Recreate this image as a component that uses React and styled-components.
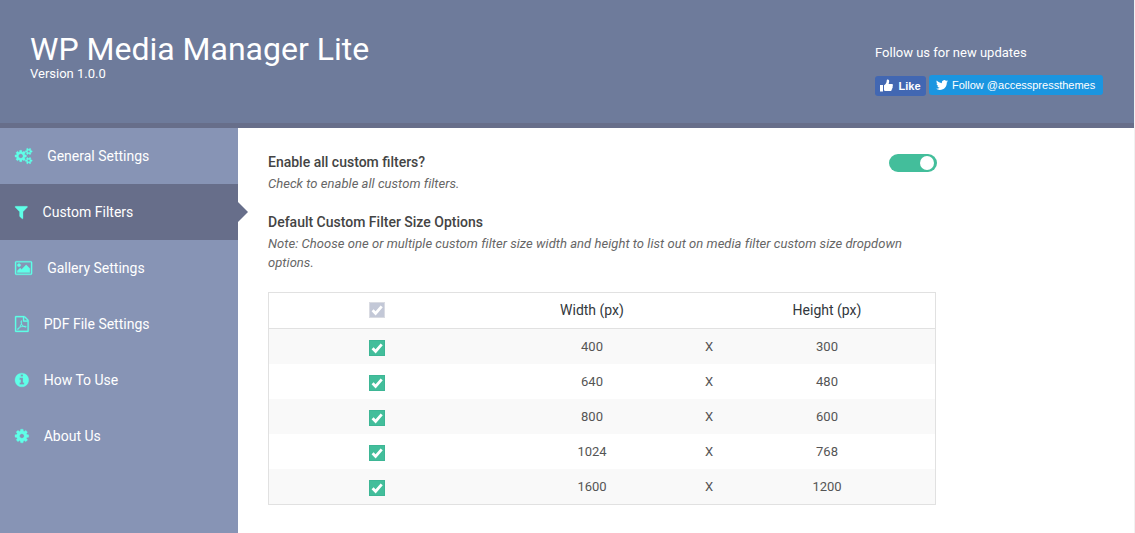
import React from "react";
import styled, { createGlobalStyle } from "styled-components";

const GlobalStyle = createGlobalStyle`
  *, *::before, *::after { box-sizing: border-box; }
  body {
    margin: 0;
    background: #fff;
    overflow: hidden;
    font-family: Roboto, "Liberation Sans", sans-serif;
  }
  h1, h2, p { margin: 0; }
`;

const Page = styled.div`
  display: flex;
  flex-direction: column;
  height: 533px;
  border-right: 1px solid #f1f1f1;
`;

const Header = styled.header`
  display: flex;
  justify-content: space-between;
  height: 128px;
  padding: 30px 30px 0;
  background: #6e7b9b;
  border-bottom: 5px solid #676e8a;
  color: #fff;
`;

const Title = styled.h1`
  font-size: 32px;
  font-weight: 400;
  line-height: 38px;
`;

const Version = styled.div`
  font-size: 13px;
  line-height: 12px;
`;

const Social = styled.div`
  width: 229px;
  padding-top: 14px;
`;

const SocialLabel = styled.p`
  font-size: 13px;
  line-height: 18px;
`;

const Buttons = styled.div`
  display: flex;
  gap: 3px;
  margin-top: 13px;
`;

const SocialButton = styled.a`
  display: flex;
  align-items: center;
  height: 20px;
  margin-top: ${(p) => p.$drop || 0}px;
  width: ${(p) => p.$width}px;
  padding-left: ${(p) => p.$pad}px;
  gap: ${(p) => p.$gap}px;
  background: ${(p) => p.$bg};
  border-radius: 3px;
  color: #fff;
  font: ${(p) => p.$weight} 11px/18px "Liberation Sans", Arial, sans-serif;
  white-space: nowrap;

  svg { margin-bottom: 1px; }
`;

const Body = styled.div`
  display: flex;
  flex: 1;
`;

const Sidebar = styled.nav`
  width: 238px;
  background: #8794b5;
`;

const NavItem = styled.a`
  position: relative;
  display: flex;
  align-items: center;
  gap: 15px;
  height: 56px;
  padding-left: 15px;
  color: #fff;
  background: ${(p) => (p.$active ? "#676e8a" : "transparent")};
  font-size: 14px;
  line-height: 20px;

  &::after {
    content: "";
    display: ${(p) => (p.$active ? "block" : "none")};
    position: absolute;
    left: 100%;
    top: 18px;
    border: 10px solid transparent;
    border-left-color: #676e8a;
    border-right-width: 0;
  }
`;

const NavIcon = styled.svg`
  display: block;
  height: 16px;
  margin-bottom: 1px;
  overflow: visible;
  fill: #5fffe8;
  stroke: #5fffe8;
  stroke-width: 35px;
`;

const Content = styled.main`
  width: 698px;
  margin-left: 30px;
  padding-top: 24px;
`;

const Option = styled.section`
  display: flex;
  justify-content: space-between;
  width: 669px;
  margin-bottom: 19px;
`;

const OptionTitle = styled.h2`
  color: #444;
  font-size: 14px;
  font-weight: 500;
  line-height: 20px;
`;

const Note = styled.p`
  padding-top: 2px;
  color: #666;
  font-size: 13px;
  font-style: italic;
  letter-spacing: 0.04px;
  line-height: 19px;
`;

const Toggle = styled.span`
  display: flex;
  justify-content: flex-end;
  width: 48px;
  height: 18px;
  margin-top: 2px;
  padding: 2px 3px;
  border-radius: 9px;
  background: #43be9b;

  &::after {
    content: "";
    width: 14px;
    height: 14px;
    border-radius: 50%;
    background: #fff;
  }
`;

const Table = styled.div`
  width: 668px;
  margin-top: 20px;
  border: 1px solid #e1e1e1;
`;

const Row = styled.div`
  display: grid;
  grid-template-columns: 216px 214px 20px 216px;
  height: 35px;
  color: #555;
  font-size: 13px;
  line-height: 35px;
  text-align: center;
  background: ${(p) => (p.$striped ? "#f9f9f9" : "#fff")};
`;

const HeadRow = styled(Row)`
  height: 36px;
  border-bottom: 1px solid #e1e1e1;
  color: #32373c;
  font-size: 14px;
`;

const CheckCell = styled.div`
  display: flex;
  justify-content: center;
  padding-top: ${(p) => p.$top}px;
`;

const CheckBox = styled.span`
  display: flex;
  width: 16px;
  height: 16px;
  border: 1px solid ${(p) => (p.$muted ? "#d9dbe2" : "#3db695")};
  background: ${(p) => (p.$muted ? "#c3c8d7" : "#43be9b")};
`;

const COGS =
  "M832 896q0-106-75-181t-181-75-181 75-75 181 75 181 181 75 181-75 75-181zm768 512q0-52-38-90t-90-38-90 38-38 90q0 53 37.5 90.5t90.5 37.5 90.5-37.5 37.5-90.5zm0-1024q0-52-38-90t-90-38-90 38-38 90q0 53 37.5 90.5t90.5 37.5 90.5-37.5 37.5-90.5zm-384 421v185q0 10-7 19.5t-16 10.5l-155 24q-11 35-32 76 34 48 90 115 7 11 7 20 0 12-7 19-23 30-82.5 89.5t-78.5 59.5q-11 0-21-7l-115-90q-37 19-77 31-11 108-23 155-7 24-30 24h-186q-11 0-20-7.5t-10-17.5l-23-153q-34-10-75-31l-118 89q-7 7-20 7-11 0-21-8-144-133-144-160 0-9 7-19 10-14 41-53t47-61q-23-44-35-82l-152-24q-10-1-17-9.5t-7-19.5v-185q0-10 7-19.5t16-10.5l155-24q11-35 32-76-34-48-90-115-7-11-7-20 0-12 7-20 22-30 82-89t79-59q11 0 21 7l115 90q34-18 77-32 11-108 23-154 7-24 30-24h186q11 0 20 7.5t10 17.5l23 153q34 10 75 31l118-89q8-7 20-7 11 0 21 8 144 133 144 160 0 8-7 19-12 16-42 54t-45 60q23 48 34 82l152 23q10 2 17 10.5t7 19.5zm640 533v140q0 16-149 31-12 27-30 52 51 113 51 138 0 4-4 7-122 71-124 71-8 0-46-47t-52-68q-20 2-30 2t-30-2q-14 21-52 68t-46 47q-2 0-124-71-4-3-4-7 0-25 51-138-18-25-30-52-149-15-149-31v-140q0-16 149-31 13-29 30-52-51-113-51-138 0-4 4-7 4-2 35-20t59-34 30-16q8 0 46 46.5t52 67.5q20-2 30-2t30 2q51-71 92-112l6-2q4 0 124 70 4 3 4 7 0 25-51 138 17 23 30 52 149 15 149 31zm0-1024v140q0 16-149 31-12 27-30 52 51 113 51 138 0 4-4 7-122 71-124 71-8 0-46-47t-52-68q-20 2-30 2t-30-2q-14 21-52 68t-46 47q-2 0-124-71-4-3-4-7 0-25 51-138-18-25-30-52-149-15-149-31v-140q0-16 149-31 13-29 30-52-51-113-51-138 0-4 4-7 4-2 35-20t59-34 30-16q8 0 46 46.5t52 67.5q20-2 30-2t30 2q51-71 92-112l6-2q4 0 124 70 4 3 4 7 0 25-51 138 17 23 30 52 149 15 149 31z";
const FILTER =
  "M1595 295q17 41-14 70l-493 493v742q0 42-39 59-13 5-25 5-27 0-45-19l-256-256q-19-19-19-45v-486l-493-493q-31-29-14-70 17-39 59-39h1280q42 0 59 39z";
const PICTURE =
  "M576 576q0 80-56 136t-136 56-136-56-56-136 56-136 136-56 136 56 56 136zm1024 384v448h-1408v-192l320-320 160 160 512-512zm96-704h-1600q-13 0-22.5 9.5t-9.5 22.5v1216q0 13 9.5 22.5t22.5 9.5h1600q13 0 22.5-9.5t9.5-22.5v-1216q0-13-9.5-22.5t-22.5-9.5zm160 32v1216q0 66-47 113t-113 47h-1600q-66 0-113-47t-47-113v-1216q0-66 47-113t113-47h1600q66 0 113 47t47 113z";
const PDF =
  "M1596 380q28 28 48 76t20 88v1152q0 40-28 68t-68 28h-1344q-40 0-68-28t-28-68v-1600q0-40 28-68t68-28h896q40 0 88 20t76 48zm-444-244v376h376q-10-29-22-41l-313-313q-12-12-41-22zm384 1528v-1024h-416q-40 0-68-28t-28-68v-416h-768v1536h1280zm-514-593q33 26 84 56 59-7 117-7 147 0 177 49 16 22 2 52 0 1-1 2l-2 2v1q-6 38-71 38-48 0-115-20t-130-53q-221 24-392 83-153 262-242 262-15 0-28-7l-24-12q-1-1-6-5-10-10-6-36 9-40 56-91.5t132-96.5q14-9 23 6 2 2 2 4 52-85 107-197 68-136 104-262-24-82-30.5-159.5t6.5-127.5q11-40 42-40h22q23 0 35 15 18 21 9 68-2 6-4 8 1 3 1 8v30q-2 123-14 192 55 164 146 238zm-576 411q52-24 137-158-51 40-87.5 84t-49.5 74zm398-920q-15 42-2 132 1-7 7-44 0-3 7-43 1-4 4-8-1-1-1-2-1-2-1-3-1-22-13-36 0 1-1 2v2zm-124 661q135-54 284-81-2-1-13-9.5t-16-13.5q-76-67-127-176-27 86-83 197-30 56-45 83zm646-16q-24-24-140-24 76 28 124 28 14 0 18-1 0-1-2-3z";
const INFO =
  "M1152 1376v-160q0-14-9-23t-23-9h-96v-512q0-14-9-23t-23-9h-320q-14 0-23 9t-9 23v160q0 14 9 23t23 9h96v320h-96q-14 0-23 9t-9 23v160q0 14 9 23t23 9h448q14 0 23-9t9-23zm-128-896v-160q0-14-9-23t-23-9h-192q-14 0-23 9t-9 23v160q0 14 9 23t23 9h192q14 0 23-9t9-23zm640 416q0 209-103 385.5t-279.5 279.5-385.5 103-385.5-103-279.5-279.5-103-385.5 103-385.5 279.5-279.5 385.5-103 385.5 103 279.5 279.5 103 385.5z";
const COG =
  "M1024 896q0-106-75-181t-181-75-181 75-75 181 75 181 181 75 181-75 75-181zm512-109v222q0 12-8 23t-20 13l-185 28q-19 54-39 91 35 50 107 138 10 12 10 25t-9 23q-27 37-99 108t-94 71q-12 0-26-9l-138-108q-44 23-91 38-16 136-29 186-7 28-36 28h-222q-14 0-24.5-8.5t-11.5-21.5l-28-184q-49-16-90-37l-141 107q-10 9-25 9-14 0-25-11-126-114-165-168-7-10-7-23 0-12 8-23 15-21 51-66.5t54-70.5q-27-50-41-99l-183-27q-13-2-21-12.5t-8-23.5v-222q0-12 8-23t19-13l186-28q14-46 39-92-40-57-107-138-10-12-10-24 0-10 9-23 26-36 98.5-107.5t94.5-71.5q13 0 26 10l138 107q44-23 91-38 16-136 29-186 7-28 36-28h222q14 0 24.5 8.5t11.5 21.5l28 184q49 16 90 37l142-107q9-9 24-9 13 0 25 10 129 119 165 170 7 8 7 22 0 12-8 23-15 21-51 66.5t-54 70.5q26 50 41 98l183 28q13 2 21 12.5t8 23.5z";

const NAV = [
  { label: "General Settings", d: COGS, x: -64, w: 1920 },
  { label: "Custom Filters", d: FILTER, x: 192, w: 1408, active: true },
  { label: "Gallery Settings", d: PICTURE, x: -64, w: 1920 },
  { label: "PDF File Settings", d: PDF, x: 128, w: 1536 },
  { label: "How To Use", d: INFO, x: 128, w: 1536 },
  { label: "About Us", d: COG, x: 0, w: 1536 },
];

const SIZES = [
  [400, 300],
  [640, 480],
  [800, 600],
  [1024, 768],
  [1600, 1200],
];

function Check({ muted }) {
  return (
    <CheckBox $muted={muted}>
      <svg width="14" height="14" viewBox="0 0 14 14">
        <path d="M2.6 7.3 5.6 10.500 11.700 3.300" fill="none" stroke="#fff" strokeWidth="2.800" />
      </svg>
    </CheckBox>
  );
}

export default function App() {
  return (
    <>
      <GlobalStyle />
      <Page>
        <Header>
          <div>
            <Title>WP Media Manager Lite</Title>
            <Version>Version 1.0.0</Version>
          </div>
          <Social>
            <SocialLabel>Follow us for new updates</SocialLabel>
            <Buttons>
              <SocialButton $bg="#4267b2" $width={51} $pad={5} $gap={5.5} $weight={700} $drop={1}>
                <svg width="13" height="13" viewBox="0 0 13 13" fill="#fff">
                  <path d="M0 6h3v6.500H0zM4 6.200c1.600-.8 2.600-2.300 2.700-4.200C6.700.8 7.100.4 7.800.4c1.300 0 1.600 1.400 1.200 3L8.600 5h3c1.500 0 1.800 1.500.8 2.100.7.6.5 1.700-.3 2 .4.8 0 1.500-.7 1.700.2.9-.3 1.300-1.400 1.300H6.800c-1.200 0-1.800-.5-2.800-.7z" />
                </svg>
                <span>Like</span>
              </SocialButton>
              <SocialButton $bg="#1b95e0" $width={174} $pad={7} $gap={4} $weight={400}>
                <svg width="12" height="12" viewBox="0 0 24 24" fill="#fff">
                  <path d="M23.954 4.569a10 10 0 0 1-2.825.775 4.958 4.958 0 0 0 2.163-2.723 9.99 9.99 0 0 1-3.127 1.184 4.92 4.92 0 0 0-8.384 4.482C7.691 8.094 4.066 6.130 1.640 3.161a4.822 4.822 0 0 0-.666 2.475c0 1.710.870 3.213 2.188 4.096a4.904 4.904 0 0 1-2.228-.616v.061a4.923 4.923 0 0 0 3.946 4.827 4.996 4.996 0 0 1-2.212.085 4.937 4.937 0 0 0 4.604 3.417 9.868 9.868 0 0 1-6.102 2.105c-.390 0-.779-.023-1.170-.067a13.995 13.995 0 0 0 7.557 2.209c9.054 0 13.999-7.496 13.999-13.986 0-.209 0-.420-.015-.630a9.936 9.936 0 0 0 2.460-2.548z" />
                </svg>
                <span>Follow @accesspressthemes</span>
              </SocialButton>
            </Buttons>
          </Social>
        </Header>
        <Body>
          <Sidebar>
            {NAV.map((item) => (
              <NavItem key={item.label} $active={item.active}>
                <NavIcon width={item.w / 112} viewBox={`${item.x} 0 ${item.w} 1792`}>
                  <path d={item.d} />
                </NavIcon>
                <span>{item.label}</span>
              </NavItem>
            ))}
          </Sidebar>
          <Content>
            <Option>
              <div>
                <OptionTitle>Enable all custom filters?</OptionTitle>
                <Note>Check to enable all custom filters.</Note>
              </div>
              <Toggle />
            </Option>
            <Option>
              <div>
                <OptionTitle>Default Custom Filter Size Options</OptionTitle>
                <Note>
                  Note: Choose one or multiple custom filter size width and height to list out on
                  media filter custom size dropdown options.
                </Note>
              </div>
            </Option>
            <Table>
              <HeadRow>
                <CheckCell $top={9}>
                  <Check muted />
                </CheckCell>
                <span>Width (px)</span>
                <span />
                <span>Height (px)</span>
              </HeadRow>
              {SIZES.map(([w, h], i) => (
                <Row key={w} $striped={i % 2 === 0}>
                  <CheckCell $top={11}>
                    <Check />
                  </CheckCell>
                  <span>{w}</span>
                  <span>X</span>
                  <span>{h}</span>
                </Row>
              ))}
            </Table>
          </Content>
        </Body>
      </Page>
    </>
  );
}
